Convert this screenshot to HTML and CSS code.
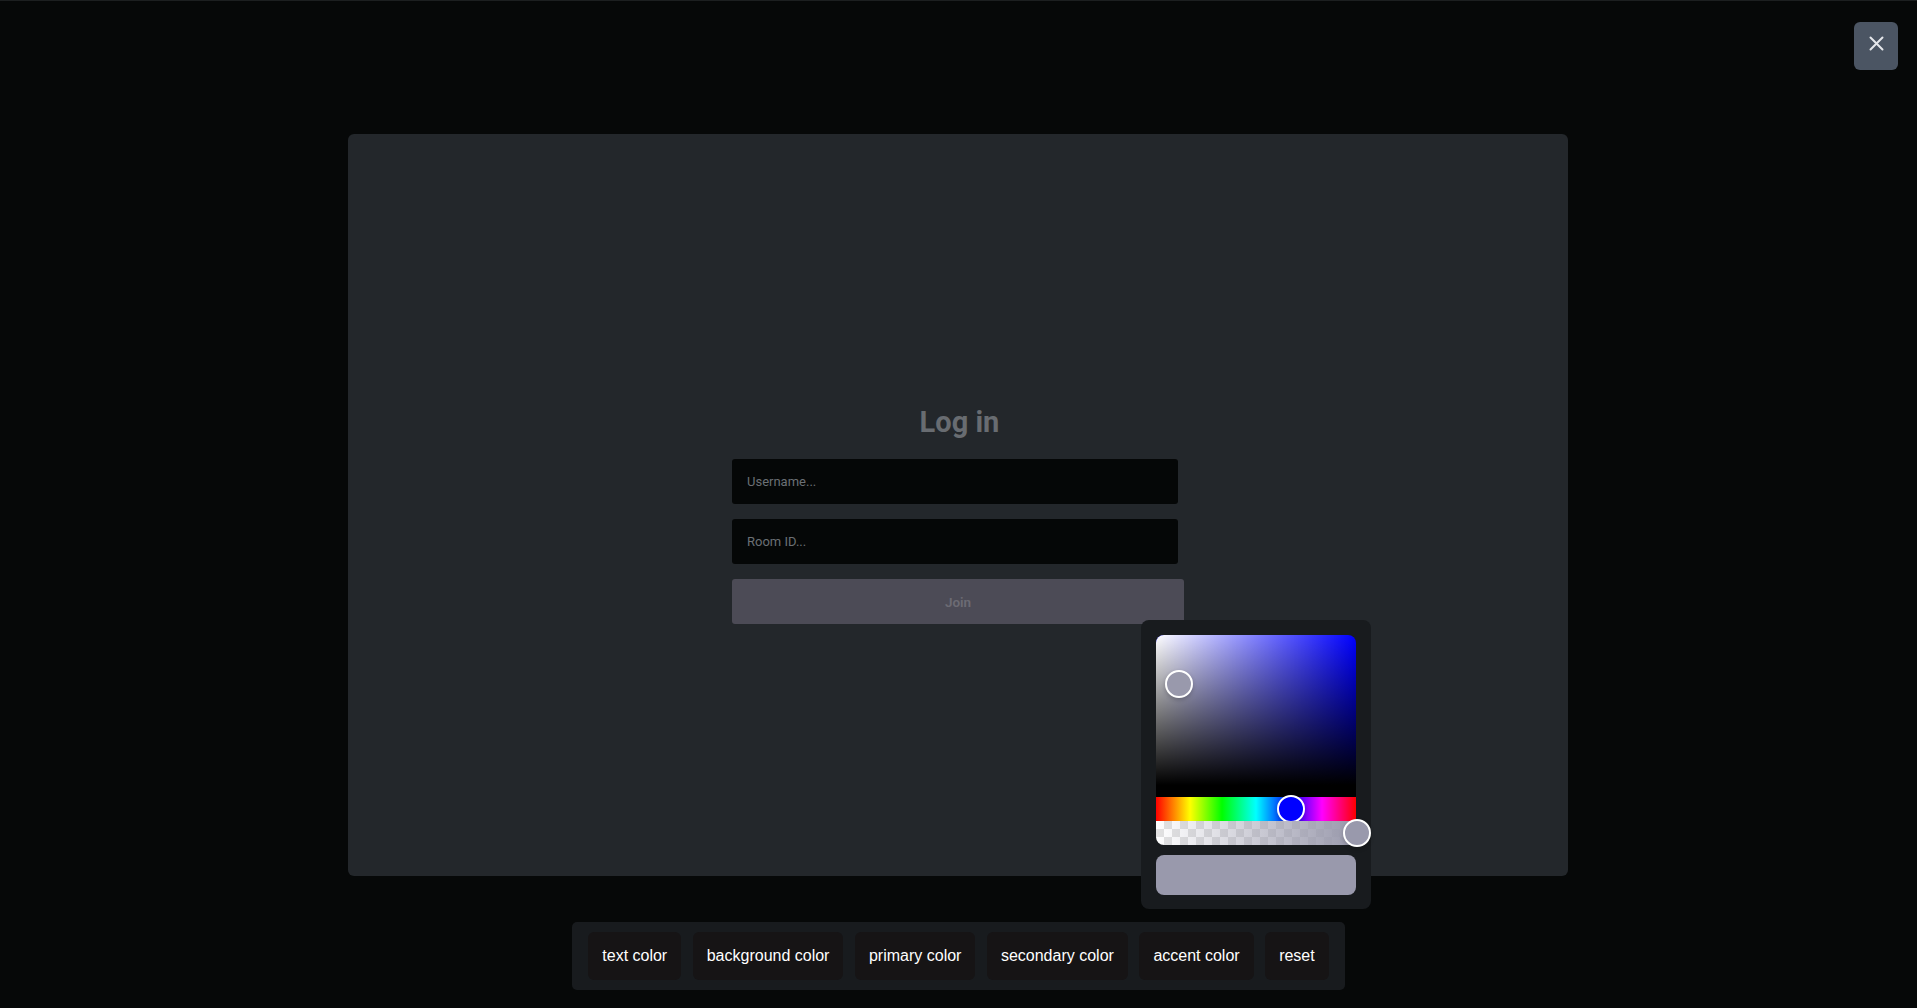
FILE: index.html
```html
<!DOCTYPE html>
<html lang="en">
<head>
<meta charset="utf-8">
<title>Log in</title>
<link rel="stylesheet" href="styles.css">
</head>
<body>
<div class="page">
  <button class="close-btn" aria-label="Close">
    <svg width="15" height="15" viewBox="0 0 15 15"><path d="M1.5 1.5 L13.5 13.5 M13.5 1.5 L1.5 13.5" stroke="#e5e7eb" stroke-width="2" stroke-linecap="round" fill="none"/></svg>
  </button>
  <main class="card">
    <form class="login">
      <h1 class="login-title">Log in</h1>
      <input class="field" type="text" placeholder="Username...">
      <input class="field" type="text" placeholder="Room ID...">
      <button class="join" type="button">Join</button>
    </form>
  </main>
  <div class="toolbar">
    <button class="tool">text color</button>
    <button class="tool">background color</button>
    <button class="tool">primary color</button>
    <button class="tool">secondary color</button>
    <button class="tool">accent color</button>
    <button class="tool">reset</button>
  </div>
  <div class="picker-pop">
    <div class="picker">
      <div class="saturation">
        <div class="pointer sat-pointer"></div>
      </div>
      <div class="hue">
        <div class="pointer hue-pointer"></div>
      </div>
      <div class="alpha">
        <div class="alpha-grad"></div>
        <div class="pointer alpha-pointer"></div>
      </div>
    </div>
    <div class="swatch"></div>
  </div>
</div>
</body>
</html>
```

FILE: styles.css
```css
* { box-sizing: border-box; }
html, body { margin: 0; padding: 0; }
body {
  background: #060808;
  font-family: Roboto, "Liberation Sans", Arial, sans-serif;
  height: 1008px;
  overflow: hidden;
}
.page {
  position: relative;
  height: 1008px;
  border-top: 1px solid #1c1f20;
  display: flex;
  flex-direction: column;
  align-items: center;
  padding-top: 133px;
}
.close-btn {
  position: absolute;
  top: 21px;
  right: 19px;
  width: 44px;
  height: 48px;
  border: none;
  border-radius: 6px;
  background: #4b5563;
  display: flex;
  align-items: center;
  justify-content: center;
  padding: 0 0 5px 0;
  cursor: pointer;
}
.card {
  width: 1220px;
  height: 742px;
  background: #23272b;
  border-radius: 6px;
  margin-left: -1px;
  display: flex;
  align-items: center;
  justify-content: center;
  padding-top: 19px;
}
.login {
  width: 452px;
  display: flex;
  flex-direction: column;
  align-items: flex-start;
}
.login-title {
  align-self: center;
  margin: 0 0 20px 0;
  font-family: Roboto, sans-serif;
  font-size: 29px;
  font-weight: 700;
  color: #686c71;
  line-height: 34px;
  padding-left: 3px;
}
.field {
  width: 446px;
  height: 45px;
  margin: 0 0 15px 0;
  border: none;
  border-radius: 3px;
  background: #050707;
  padding: 0 15px;
  font-family: Roboto, sans-serif;
  font-size: 13px;
  color: #d0d0d0;
  outline: none;
}
.field::placeholder { color: #6b7075; }
.join {
  width: 452px;
  height: 45px;
  border: none;
  border-radius: 3px;
  background: #4c4b56;
  font-family: Roboto, sans-serif;
  font-size: 13.5px;
  font-weight: 600;
  color: #6c6b74;
  padding: 0;
}
.toolbar {
  margin-top: 46px;
  display: flex;
  gap: 11.5px;
  padding: 10px 16px;
  background: #181b1e;
  border-radius: 5px;
}
.tool {
  height: 48px;
  padding: 0 14px;
  border: none;
  border-radius: 6px;
  background: #161415;
  color: #ffffff;
  font-family: "Liberation Sans", Arial, sans-serif;
  font-size: 16px;
}
.picker-pop {
  position: absolute;
  left: 1141px;
  top: 619px;
  width: 230px;
  padding: 15px 15px 14px 15px;
  background: #181b1e;
  border-radius: 8px;
}
.picker {
  width: 200px;
  display: flex;
  flex-direction: column;
}
.pointer {
  position: absolute;
  width: 28px;
  height: 28px;
  border: 2px solid #fff;
  border-radius: 50%;
  box-shadow: 0 2px 4px rgba(0,0,0,0.2);
  transform: translate(-50%, -50%);
}
.saturation {
  position: relative;
  height: 162px;
  border-radius: 8px 8px 0 0;
  border-bottom: 12px solid #000;
  background-color: #0000ff;
  background-image: linear-gradient(0deg, #000, rgba(0,0,0,0)), linear-gradient(90deg, #fff, rgba(255,255,255,0));
}
.sat-pointer {
  left: 23px;
  top: 49px;
  background: #9999ac;
}
.hue {
  position: relative;
  height: 24px;
  background: linear-gradient(to right, #f00 0%, #ff0 17%, #0f0 33%, #0ff 50%, #00f 67%, #f0f 83%, #f00 100%);
}
.hue-pointer {
  left: 135px;
  top: 12px;
  background: #0000ff;
}
.alpha {
  position: relative;
  height: 24px;
  border-radius: 0 0 8px 8px;
  background: conic-gradient(#e2e2e2 25%, #fff 0 50%, #e2e2e2 0 75%, #fff 0) 0 0 / 16px 16px;
}
.alpha-grad {
  position: absolute;
  inset: 0;
  border-radius: 0 0 8px 8px;
  background: linear-gradient(90deg, rgba(153,153,172,0), rgba(153,153,172,1));
}
.alpha-pointer {
  left: 201px;
  top: 12px;
  background: #9999ac;
}
.swatch {
  margin-top: 10px;
  width: 200px;
  height: 40px;
  border-radius: 8px;
  background: #9999ac;
}
```
